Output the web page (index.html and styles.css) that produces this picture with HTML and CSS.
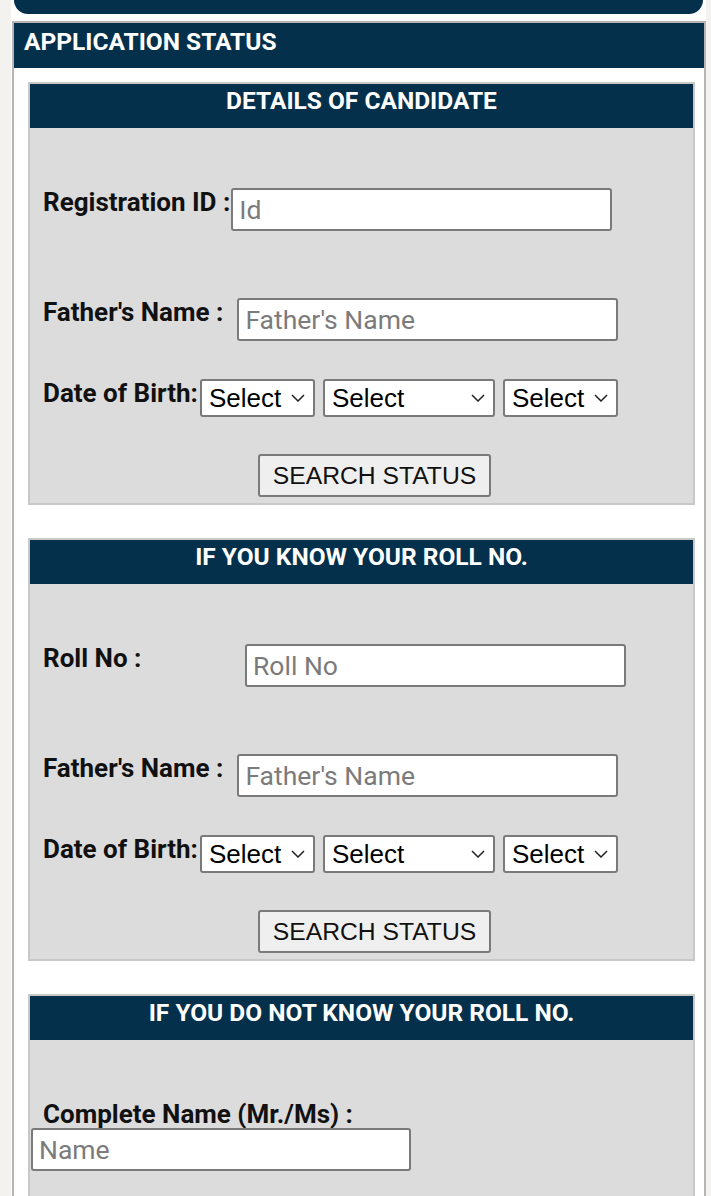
FILE: index.html
```html
<!DOCTYPE html>
<html lang="en">
<head>
<meta charset="utf-8">
<title>Application Status</title>
<link rel="stylesheet" href="styles.css">
</head>
<body>
<div class="wrap">
  <div class="topbar"></div>
  <div class="status-box">
    <div class="status-head">APPLICATION STATUS</div>
    <div class="status-body">

      <section class="panel">
        <div class="panel-head">DETAILS OF CANDIDATE</div>
        <div class="panel-body">
          <div class="row row-first">
            <label class="lbl">Registration ID :</label>
            <input class="txt txt-reg" type="text" placeholder="Id">
          </div>
          <div class="row row-father">
            <label class="lbl">Father's Name :</label>
            <input class="txt" type="text" placeholder="Father's Name">
          </div>
          <div class="row row-dob">
            <label class="lbl">Date of Birth:</label>
            <div class="dob">
              <select class="sel sel-day"><option>Select</option></select>
              <select class="sel sel-month"><option>Select</option></select>
              <select class="sel sel-year"><option>Select</option></select>
            </div>
          </div>
          <div class="btn-row">
            <button class="btn" type="button">SEARCH STATUS</button>
          </div>
        </div>
      </section>

      <section class="panel">
        <div class="panel-head">IF YOU KNOW YOUR ROLL NO.</div>
        <div class="panel-body">
          <div class="row row-first">
            <label class="lbl lbl-roll">Roll No :</label>
            <input class="txt" type="text" placeholder="Roll No">
          </div>
          <div class="row row-father">
            <label class="lbl">Father's Name :</label>
            <input class="txt" type="text" placeholder="Father's Name">
          </div>
          <div class="row row-dob">
            <label class="lbl">Date of Birth:</label>
            <div class="dob">
              <select class="sel sel-day"><option>Select</option></select>
              <select class="sel sel-month"><option>Select</option></select>
              <select class="sel sel-year"><option>Select</option></select>
            </div>
          </div>
          <div class="btn-row">
            <button class="btn" type="button">SEARCH STATUS</button>
          </div>
        </div>
      </section>

      <section class="panel">
        <div class="panel-head">IF YOU DO NOT KNOW YOUR ROLL NO.</div>
        <div class="panel-body panel-body-last">
          <div class="stack">
            <label class="lbl lbl-block">Complete Name (Mr./Ms) :</label>
            <input class="txt txt-name" type="text" placeholder="Name">
          </div>
        </div>
      </section>

    </div>
  </div>
</div>
</body>
</html>
```

FILE: styles.css
```css
* { box-sizing: border-box; }

html, body {
  margin: 0;
  padding: 0;
}

body {
  background: #f3f2ee;
  font-family: Roboto, "Liberation Sans", Arial, sans-serif;
  color: #111;
}

.wrap {
  margin-left: 11px;
  width: 695px;
  background: #ffffff;
  padding-bottom: 40px;
}

.topbar {
  margin: 0 3px;
  height: 14px;
  background: #04304c;
  border-radius: 0 0 14px 14px;
}

.status-box {
  margin-top: 7px;
  margin-left: 1px;
  width: 694px;
  border: 2px solid #b5b5b5;
  background: #ffffff;
}

.status-head {
  height: 45px;
  background: #04304c;
  color: #ffffff;
  font-weight: 700;
  font-size: 24.5px;
  line-height: 26px;
  padding: 6px 0 0 10px;
}

.status-body {
  padding: 14px 9px 0 14px;
  display: flex;
  flex-direction: column;
  gap: 33px;
}

.panel {
  border: 2px solid #c8c8c8;
  background: #dcdcdc;
}

.panel-head {
  height: 44px;
  background: #04304c;
  color: #ffffff;
  font-weight: 700;
  font-size: 24.5px;
  line-height: 26px;
  padding-top: 4px;
  text-align: center;
}

.panel-body {
  padding: 0 0 6px 13px;
}

.panel-body-last {
  padding-bottom: 80px;
}

.row {
  display: flex;
  align-items: flex-start;
}

.row-first { margin-top: 60px; }
.row-father { margin-top: 67px; }
.row-dob { margin-top: 38px; }

.lbl {
  font-weight: 700;
  font-size: 26px;
  line-height: 28px;
  margin-top: 0;
  color: #111;
  white-space: nowrap;
}

.lbl-roll { width: 202px; }

.row-father .lbl { margin-right: 14px; }

.txt {
  width: 381px;
  height: 43px;
  border: 2px solid #7a7a7a;
  border-radius: 3px;
  background: #ffffff;
  padding: 0 6px;
  font-family: Roboto, "Liberation Sans", Arial, sans-serif;
  font-size: 26.5px;
  color: #222;
  outline: none;
}

.txt::placeholder { color: #7b7b7b; }

.txt-reg { margin-left: 1px; }

.dob {
  display: flex;
  gap: 8px;
  margin-left: 2px;
}

.sel {
  -webkit-appearance: none;
  appearance: none;
  height: 38px;
  border: 2px solid #7a7a7a;
  border-radius: 3px;
  background-color: #ffffff;
  background-image: url("data:image/svg+xml,%3Csvg xmlns='http://www.w3.org/2000/svg' width='14' height='8' viewBox='0 0 14 8'%3E%3Cpolyline points='1,1 7,7 13,1' fill='none' stroke='%23222' stroke-width='1.5'/%3E%3C/svg%3E");
  background-repeat: no-repeat;
  background-position: right 8px center;
  background-size: 14px 8px;
  padding: 0 0 0 7px;
  font-family: "Liberation Sans", Arial, sans-serif;
  font-size: 26px;
  color: #000;
  outline: none;
}

.sel-day, .sel-year { width: 115px; }
.sel-month { width: 172px; }

.btn-row {
  margin-top: 37px;
  padding-left: 215px;
}

.btn {
  width: 233px;
  height: 43px;
  border: 2px solid #7a7a7a;
  border-radius: 3px;
  background: #efefef;
  font-family: "Liberation Sans", Arial, sans-serif;
  font-size: 24.7px;
  color: #111;
  padding: 0;
}

.stack {
  margin-top: 60px;
  margin-left: -12px;
}

.lbl-block {
  display: block;
  margin: 0 0 0 12px;
}

.txt-name { width: 380px; }
```
